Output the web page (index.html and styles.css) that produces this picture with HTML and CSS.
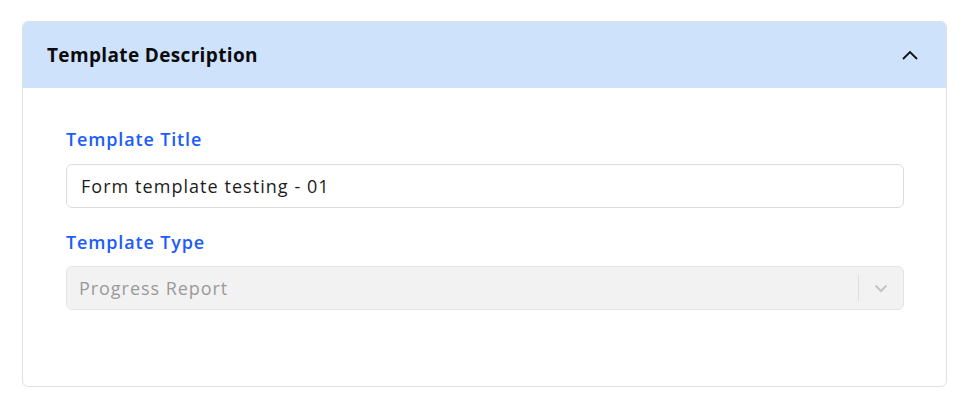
FILE: index.html
```html
<!DOCTYPE html>
<html lang="en">
<head>
<meta charset="utf-8">
<title>Template Description</title>
<link rel="stylesheet" href="styles.css">
</head>
<body>
<div class="page">
  <section class="card">
    <header class="card-header">
      <h2 class="card-title">Template Description</h2>
      <svg class="chev-up" width="18" height="10" viewBox="0 0 18 10" aria-hidden="true">
        <path d="M2 9 L9 2 L16 9" fill="none" stroke="#111" stroke-width="1.8"/>
      </svg>
    </header>
    <div class="card-body">
      <div class="field">
        <label class="field-label">Template Title</label>
        <div class="input">Form template testing - 01</div>
      </div>
      <div class="field field-select">
        <label class="field-label">Template Type</label>
        <div class="select">
          <span class="select-value">Progress Report</span>
          <span class="select-sep"></span>
          <span class="select-arrow">
            <svg width="14" height="9" viewBox="0 0 14 9" aria-hidden="true">
              <path d="M1.5 1.5 L7 7 L12.5 1.5" fill="none" stroke="#c4c4c4" stroke-width="2"/>
            </svg>
          </span>
        </div>
      </div>
    </div>
  </section>
</div>
</body>
</html>
```

FILE: styles.css
```css
html, body {
  margin: 0;
  padding: 0;
  background: #ffffff;
}
body {
  font-family: "Open Sans", "Liberation Sans", sans-serif;
  color: #1c1c1c;
}
.page {
  padding: 21px 23px 0 22px;
}
.card {
  border: 1px solid #e0e0e0;
  border-radius: 6px;
  overflow: hidden;
  height: 366px;
  box-sizing: border-box;
}
.card-header {
  background: #cfe2fc;
  height: 66px;
  display: flex;
  align-items: center;
  justify-content: space-between;
  padding: 0 27px 0 24px;
}
.card-title {
  margin: 0;
  font-size: 19px;
  font-weight: 700;
  letter-spacing: 0.35px;
  color: #0b0b0b;
}
.chev-up {
  display: block;
}
.card-body {
  padding: 39px 42px 0 43px;
  display: flex;
  flex-direction: column;
  gap: 22px;
}
.field {
  display: flex;
  flex-direction: column;
  gap: 13px;
}
.field-select {
  gap: 12px;
}
.field-label {
  font-size: 18px;
  font-weight: 600;
  color: #1b5cfb;
  line-height: 24px;
  letter-spacing: 0.85px;
}
.input, .select {
  height: 44px;
  box-sizing: border-box;
  border: 1px solid #dcdcdc;
  border-radius: 6px;
  display: flex;
  align-items: center;
  font-size: 18px;
  letter-spacing: 1.05px;
}
.input {
  padding: 0 14px;
  color: #1c1c1c;
}
.select {
  background: #f2f2f2;
  border-color: #e3e3e3;
  padding-left: 12px;
}
.select-value {
  flex: 1;
  color: #9a9a9a;
  letter-spacing: 0.95px;
}
.select-sep {
  width: 1px;
  height: 26px;
  background: #dedede;
}
.select-arrow {
  width: 44px;
  display: flex;
  align-items: center;
  justify-content: center;
}
.select-arrow svg {
  display: block;
}
```
